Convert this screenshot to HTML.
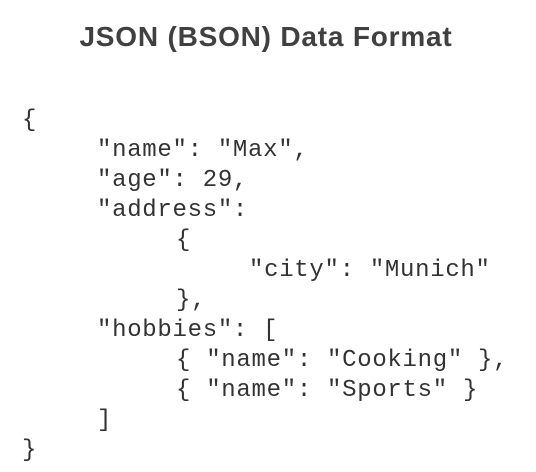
<!DOCTYPE html>
<html><head><style>
body{margin:0;width:536px;height:472px;background:#fff;overflow:hidden;position:relative}
h1{position:absolute;top:21px;left:-2px;width:536px;margin:0;text-align:center;font:bold 28px "Liberation Sans",sans-serif;color:#404040;letter-spacing:0.8px}
.l{position:absolute;font:24px/30px "Liberation Mono",monospace;color:#333;white-space:pre;letter-spacing:0.7px}
</style></head><body>
<h1>JSON (BSON) Data Format</h1>
<div class="l" style="top:106px;left:22px">{</div>
<div class="l" style="top:136px;left:97px">"name": "Max",</div>
<div class="l" style="top:166px;left:97px">"age": 29,</div>
<div class="l" style="top:196px;left:97px">"address":</div>
<div class="l" style="top:226px;left:176px">{</div>
<div class="l" style="top:256px;left:249px">"city": "Munich"</div>
<div class="l" style="top:286px;left:176px">},</div>
<div class="l" style="top:316px;left:97px">"hobbies": [</div>
<div class="l" style="top:346px;left:176px">{ "name": "Cooking" },</div>
<div class="l" style="top:376px;left:176px">{ "name": "Sports" }</div>
<div class="l" style="top:406px;left:97px">]</div>
<div class="l" style="top:436px;left:22px">}</div>
</body></html>
